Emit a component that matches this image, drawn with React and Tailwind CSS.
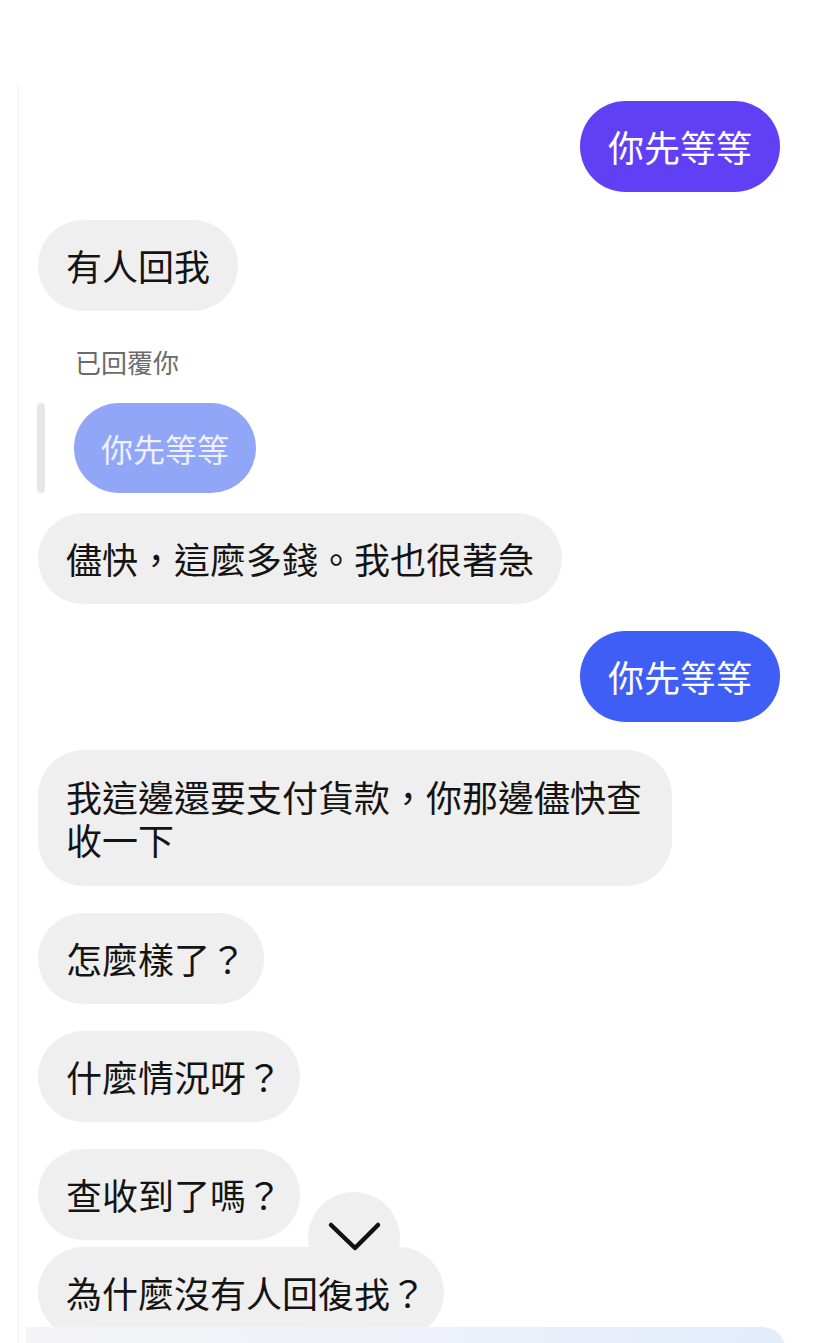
import React from "react";

const font = { fontFamily: '"Noto Sans CJK TC", "Noto Sans CJK SC", "Noto Sans", sans-serif' };

function Q() {
  return <span className="mr-[-10px]">？</span>;
}

function Left({ children, className = "whitespace-nowrap" }) {
  return (
    <div className="flex justify-start">
      <div className={`bg-[#efefef] text-[#141414] text-[36px] leading-[43px] px-[28px] py-[24px] rounded-[46px] max-w-[634px] ${className}`}>
        {children}
      </div>
    </div>
  );
}

function Right({ children, color }) {
  return (
    <div className="flex justify-end pr-[33px]">
      <div className={`${color} text-white text-[36px] leading-[43px] px-[28px] py-[24px] rounded-full whitespace-nowrap`}>
        {children}
      </div>
    </div>
  );
}

export default function App() {
  return (
    <div className="relative w-[813px] h-[1343px] overflow-hidden bg-white" style={font}>
      <div className="pt-[85px] pl-[18px]">
        <div className="border-l border-[#f1f1f1] pl-[19px] pt-[16px] pb-[40px] flex flex-col">
          <Right color="bg-[#5f40f5]">你先等等</Right>
          <div className="mt-[28px]">
            <Left>有人回我</Left>
          </div>
          <div className="mt-[34px] pl-[37px] text-[26px] leading-[34px] text-[#6b6b6b]">已回覆你</div>
          <div className="mt-[24px] flex items-stretch ml-[-1px]">
            <div className="w-[8px] rounded-full bg-[#e6e6e6]"></div>
            <div className="ml-[29px] bg-[#92a6f7] text-[#eef1fe] text-[32px] leading-[42px] px-[27px] py-[24px] rounded-full whitespace-nowrap">
              你先等等
            </div>
          </div>
          <div className="mt-[20px]">
            <Left>儘快，這麼多錢。我也很著急</Left>
          </div>
          <div className="mt-[27px]">
            <Right color="bg-[#3e5ef6]">你先等等</Right>
          </div>
          <div className="mt-[28px]">
            <Left className="py-[25px] rounded-[44px]">我這邊還要支付貨款，你那邊儘快查收一下</Left>
          </div>
          <div className="mt-[27px]">
            <Left>怎麼樣了<Q /></Left>
          </div>
          <div className="mt-[27px]">
            <Left>什麼情況呀<Q /></Left>
          </div>
          <div className="mt-[27px]">
            <Left>查收到了嗎<Q /></Left>
          </div>
          <div className="mt-[7px]">
            <Left>為什麼沒有人回復我<Q /></Left>
          </div>
        </div>
      </div>

      <div className="absolute left-[308px] top-[1192px] w-[92px] h-[92px] rounded-full bg-[#efefef]">
        <svg width="92" height="92" viewBox="0 0 92 92" className="absolute left-0 top-0">
          <polyline points="23,33 47,56 70,33" fill="none" stroke="#111" strokeWidth="4.5" strokeLinecap="round" strokeLinejoin="round" />
        </svg>
      </div>

      <div className="absolute left-[26px] top-[1327px] w-[760px] h-[40px] rounded-tr-[24px] bg-gradient-to-r from-[#f4f4f6] via-[#eef1f8] to-[#e2ecfc]"></div>
    </div>
  );
}
